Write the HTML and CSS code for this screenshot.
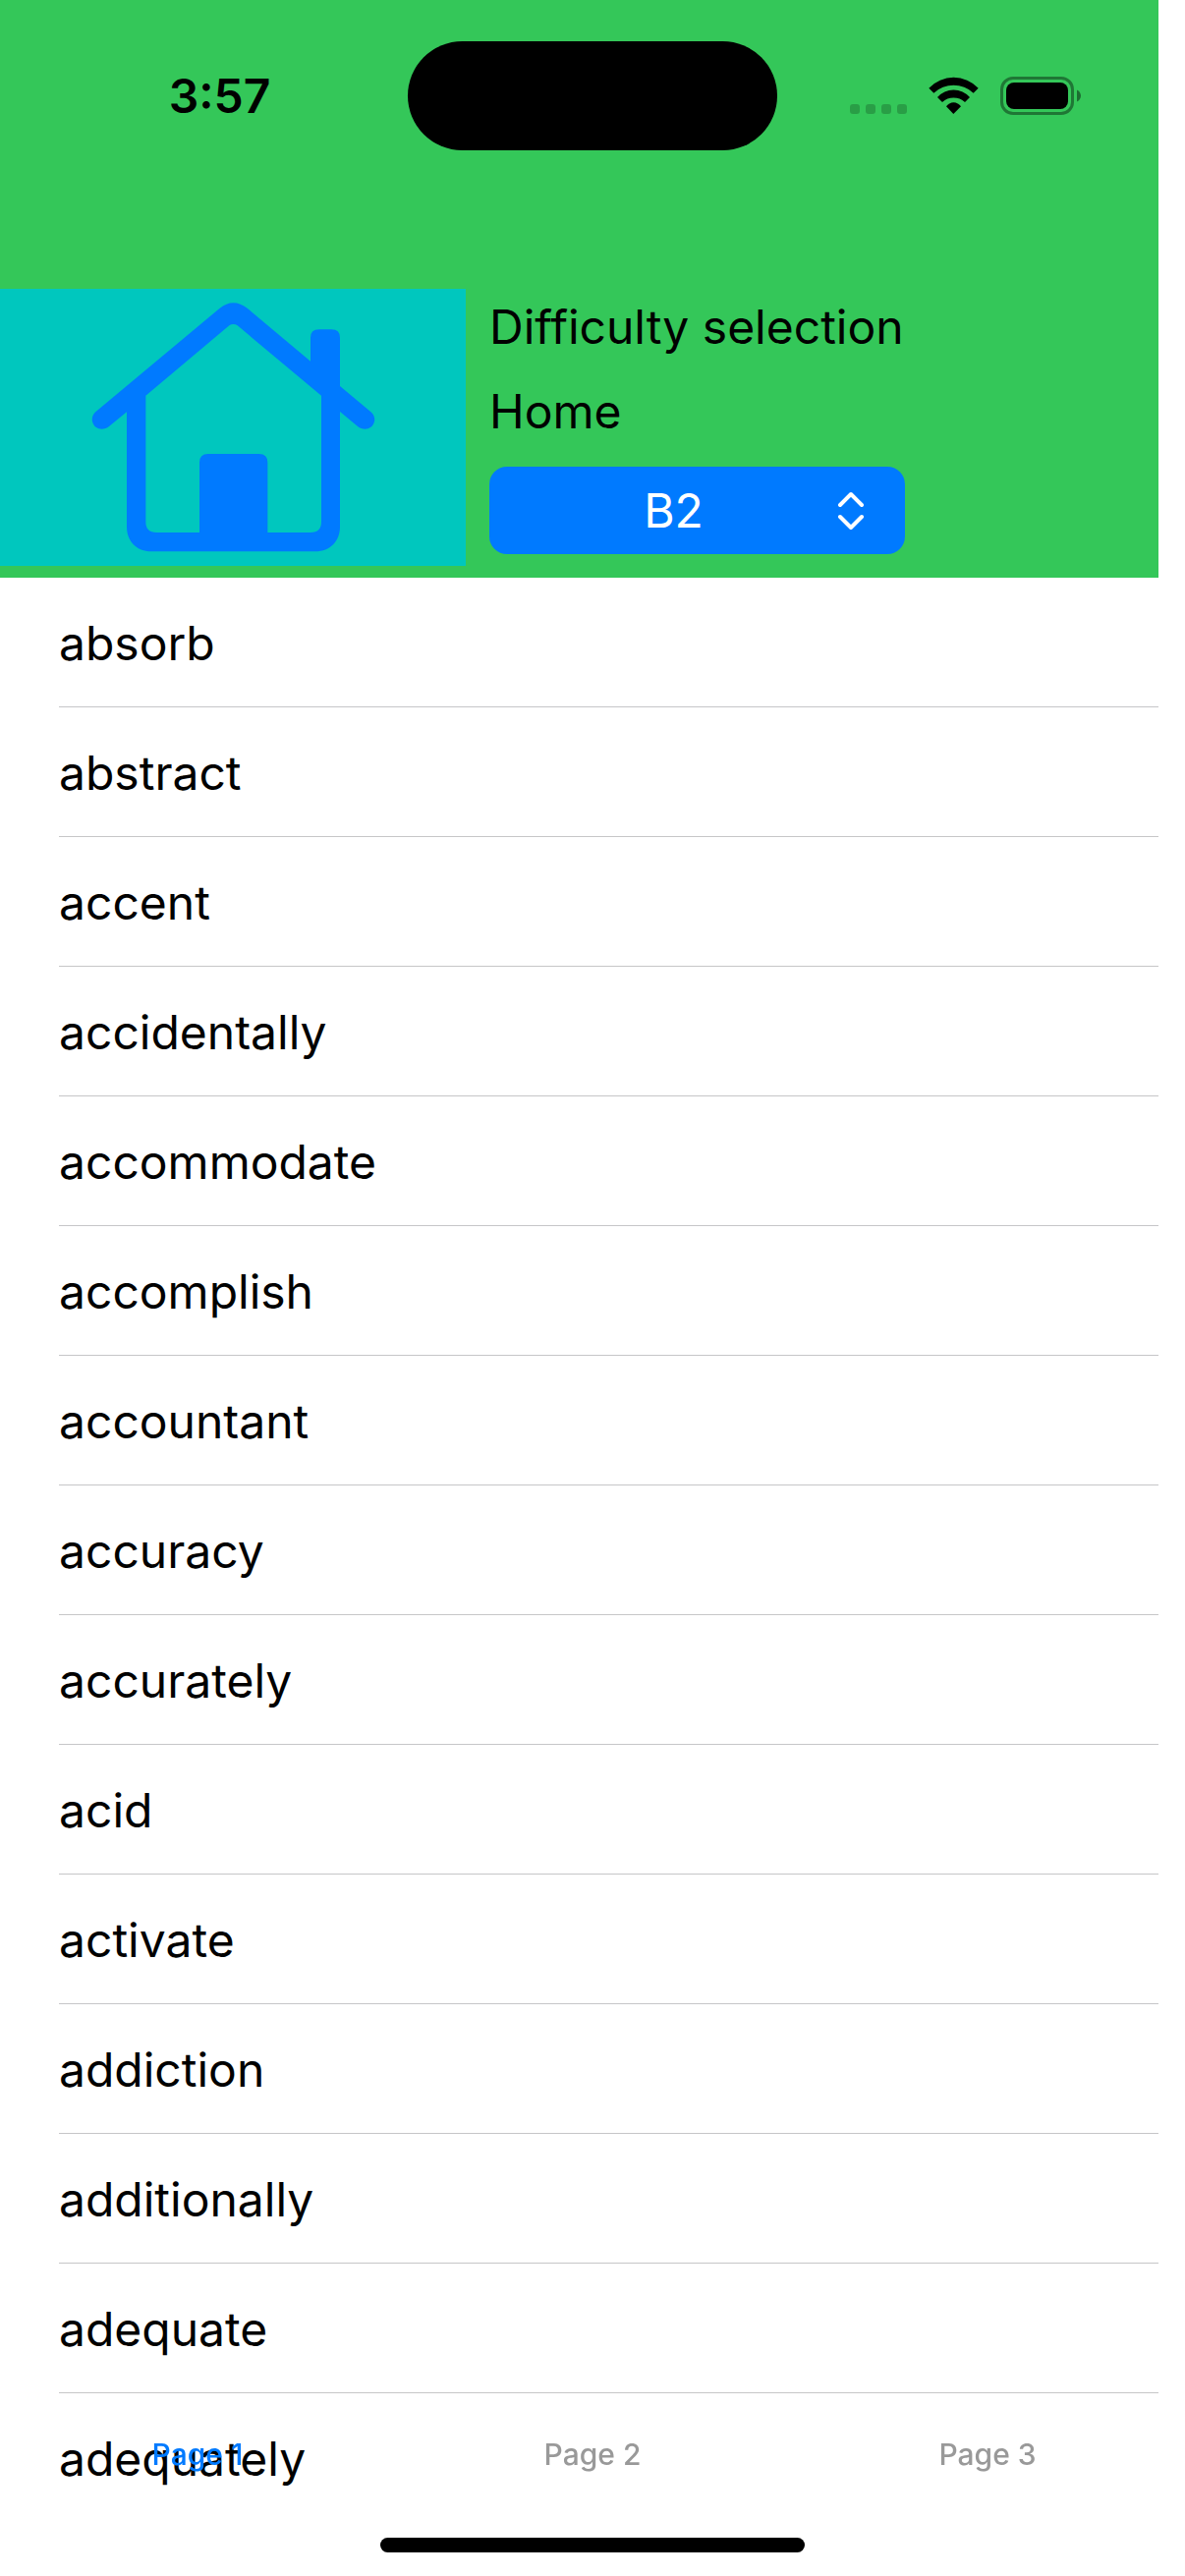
FILE: index.html
```html
<!DOCTYPE html>
<html lang="en">
<head>
<meta charset="utf-8">
<meta name="viewport" content="width=device-width, initial-scale=1">
<title>Home</title>
<link rel="stylesheet" href="styles.css">
</head>
<body>
<div class="status-bar">
  <time class="clock">3:57</time>
  <div class="island"></div>
  <div class="indicators">
    <svg class="cellular" viewBox="0 0 58 39" aria-hidden="true">
      <rect x="0" y="28" width="10" height="10" rx="3"/>
      <rect x="16" y="28" width="10" height="10" rx="3"/>
      <rect x="32" y="28" width="10" height="10" rx="3"/>
      <rect x="48" y="28" width="10" height="10" rx="3"/>
    </svg>
    <svg class="wifi" viewBox="285 54 153 117" aria-hidden="true">
      <path d="M286 89A104 104 0 0 1 437 89L422 104A89 89 0 0 0 301 104Z"/>
      <path d="M312 117A66 66 0 0 1 411 117L396 132A51 51 0 0 0 327 132Z"/>
      <path d="M339 145A27 27 0 0 1 384 145L361 168Z"/>
    </svg>
    <svg class="battery" viewBox="0 0 82 39" aria-hidden="true">
      <rect class="battery-shell" x="1.5" y="1.5" width="72" height="36" rx="11.5"/>
      <path class="battery-tip" d="M78 13.500C80.500 14.500 82 17 82 19.500S80.500 24.500 78 25.500Z"/>
      <rect x="6" y="6" width="63" height="27" rx="8"/>
    </svg>
  </div>
</div>

<div class="screen">
  <header class="header">
    <button class="home-button" type="button" aria-label="Home">
      <svg class="home-icon" viewBox="0 41 1422 846" aria-hidden="true">
        <path fill-rule="evenodd" d="M290 418L670 101Q712 67 756 101L948 262V190Q948 165 974 165H1012Q1038 165 1038 190V338L1134 418C1143 427 1145 437 1143 446C1138 470 1110 476 1092 461L1038 416V768C1038 812 1008 843 963 843H462C417 843 387 812 387 768V417L333 461C315 476 287 470 282 446C280 437 282 427 290 418ZM445 367V752Q445 785 478 785H609V571Q609 545 635 545H791Q817 545 817 571V785H948Q981 785 981 752V367L725 153Q712 145 700 153Z"/>
      </svg>
    </button>
    <div class="settings">
      <label class="caption" for="difficulty">Difficulty selection</label>
      <h1 class="caption">Home</h1>
      <div class="picker">
        <select class="picker-select" id="difficulty">
          <option>A1</option>
          <option>A2</option>
          <option>B1</option>
          <option selected>B2</option>
          <option>C1</option>
        </select>
        <svg class="picker-arrows" viewBox="0 0 28 40" aria-hidden="true">
          <path d="M3 14L14 3L25 14M3 26L14 37L25 26"/>
        </svg>
      </div>
    </div>
  </header>

  <main>
    <ul class="words">
      <li class="word">absorb</li>
      <li class="word">abstract</li>
      <li class="word">accent</li>
      <li class="word">accidentally</li>
      <li class="word">accommodate</li>
      <li class="word">accomplish</li>
      <li class="word">accountant</li>
      <li class="word">accuracy</li>
      <li class="word">accurately</li>
      <li class="word">acid</li>
      <li class="word">activate</li>
      <li class="word">addiction</li>
      <li class="word">additionally</li>
      <li class="word">adequate</li>
      <li class="word">adequately</li>
    </ul>
  </main>
</div>

<div class="bottom-bar">
  <nav class="tabs" aria-label="Pages">
    <a class="tab tab-active" href="#page-1" aria-current="page">Page 1</a>
    <a class="tab" href="#page-2">Page 2</a>
    <a class="tab" href="#page-3">Page 3</a>
  </nav>
  <div class="home-indicator"></div>
</div>
</body>
</html>
```
FILE: styles.css
```css
* {
  box-sizing: border-box;
}

body {
  margin: 0;
  background: #fff;
  color: #000;
  font-family: Inter, "Liberation Sans", sans-serif;
  font-size: 48px;
  line-height: 60px;
}

/* System status bar, floating over the header */
.status-bar {
  position: absolute;
  top: 0;
  left: 0;
  right: 0;
  display: grid;
  grid-template-columns: 1fr 376px 1fr;
  align-items: center;
  padding-top: 42px;
}

.clock {
  padding-left: 32px;
  text-align: center;
  font-weight: 600;
}

.island {
  height: 111px;
  border-radius: 56px;
  background: #000;
}

.indicators {
  display: flex;
  justify-content: flex-end;
  gap: 22px;
  padding-right: 106px;
}

.cellular {
  width: 58px;
  height: 39px;
  opacity: 0.2;
}

.wifi {
  width: 51px;
  height: 39px;
}

.battery {
  width: 82px;
  height: 39px;
}

.battery-shell {
  fill: none;
  stroke: #000;
  stroke-width: 3;
  opacity: 0.4;
}

.battery-tip {
  opacity: 0.45;
}

.screen {
  margin-right: 27px;
}

.header {
  display: flex;
  gap: 24px;
  padding: 294px 0 12px;
  background: #34c759;
}

.home-button {
  flex: none;
  width: 474px;
  height: 282px;
  padding: 0;
  border: 0;
  background: #00c7be;
}

.home-icon {
  display: block;
  width: 100%;
  fill: #007aff;
}

.settings {
  display: flex;
  flex-direction: column;
  gap: 26px;
  min-width: 423px;
  padding-top: 9px;
}

.caption {
  margin: 0;
  font-size: 48px;
  font-weight: 400;
  line-height: 60px;
}

.picker {
  display: grid;
  align-items: center;
}

.picker-select {
  grid-area: 1 / 1;
  width: 100%;
  height: 89px;
  padding: 0 48px 0 0;
  border: 0;
  border-radius: 18px;
  background: #007aff;
  color: #fff;
  font: inherit;
  text-align: center;
  text-align-last: center;
  appearance: none;
}

.picker-arrows {
  grid-area: 1 / 1;
  justify-self: end;
  width: 28px;
  height: 40px;
  margin-right: 41px;
  fill: none;
  stroke: #fff;
  stroke-width: 4;
  stroke-linecap: round;
  stroke-linejoin: round;
  pointer-events: none;
}

.words {
  margin: 0;
  padding: 0 0 54px 60px;
  list-style: none;
}

.word {
  display: flex;
  align-items: center;
  height: 132px;
  padding-top: 2px;
  border-bottom: 1px solid #c6c6c8;
}

.word:last-child {
  border-bottom-color: transparent;
}

/* Tab labels and home indicator, floating over the end of the list */
.bottom-bar {
  position: fixed;
  left: 0;
  right: 0;
  bottom: 0;
  padding-bottom: 24px;
}

.tabs {
  display: grid;
  grid-template-columns: repeat(3, 1fr);
  margin-bottom: 67px;
}

.tab {
  color: #999;
  font-size: 30px;
  font-weight: 500;
  line-height: 36px;
  text-align: center;
  text-decoration: none;
}

.tab-active {
  color: #007aff;
}

.home-indicator {
  width: 432px;
  height: 15px;
  margin: 0 auto;
  border-radius: 8px;
  background: #000;
}
```
